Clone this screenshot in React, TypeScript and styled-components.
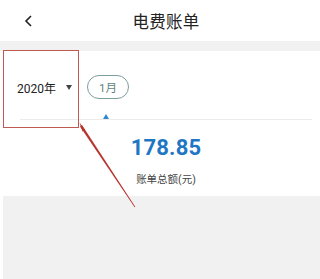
import React from 'react'
import styled, { createGlobalStyle } from 'styled-components'

const GlobalStyle = createGlobalStyle`
  body {
    margin: 0;
    font-family: Roboto, "Noto Sans CJK SC", sans-serif;
    background: #fff;
  }
`

const Page = styled.div`
  position: relative;
  width: 320px;
  height: 279px;
  overflow: hidden;
  background: #fff;
  display: flex;
  flex-direction: column;
`

const Header = styled.div`
  height: 41px;
  display: flex;
  align-items: center;
  padding-left: 24px;
  padding-right: 12px;
`

const BackButton = styled.div`
  width: 10px;
  height: 14px;
  display: flex;
  align-items: center;
`

const Title = styled.div`
  flex: 1;
  text-align: center;
  font-size: 16.5px;
  color: #222;
  letter-spacing: 0.3px;
  padding-right: 10px;
`

const Band = styled.div`
  height: 10px;
  background: #f1f1f1;
`

const FilterRow = styled.div`
  height: 68px;
  padding-top: 4px;
  display: flex;
  align-items: center;
  box-sizing: border-box;
`

const YearSelect = styled.div`
  width: 70px;
  padding-left: 17px;
  display: flex;
  align-items: center;
  font-size: 12px;
  color: #222;
`

const Caret = styled.span`
  margin-left: 10px;
  width: 0;
  height: 0;
  border-left: 3px solid transparent;
  border-right: 3px solid transparent;
  border-top: 5px solid #444;
`

const MonthPill = styled.div`
  height: 24px;
  width: 42px;
  box-sizing: border-box;
  border: 1px solid #7d9c9c;
  border-radius: 12px;
  display: flex;
  align-items: center;
  justify-content: center;
  font-size: 11.5px;
  color: #5f7f80;
`

const IndicatorRow = styled.div`
  margin: -5px 8px 0 20px;
  height: 5px;
  border-bottom: 1px solid #ececec;
  display: flex;
  align-items: flex-end;
`

const Pointer = styled.span`
  margin-left: 83px;
  width: 0;
  height: 0;
  border-left: 3.5px solid transparent;
  border-right: 3.5px solid transparent;
  border-bottom: 5px solid #2f86d2;
`

const Summary = styled.div`
  display: flex;
  flex-direction: column;
  align-items: center;
  padding-left: 12px;
  padding-top: 15px;
  height: 76px;
  box-sizing: border-box;
`

const Amount = styled.div`
  font-size: 22px;
  line-height: 26px;
  font-weight: 700;
  color: #1f77c4;
  letter-spacing: 0.2px;
`

const AmountLabel = styled.div`
  margin-top: 11px;
  font-size: 10.5px;
  line-height: 16px;
  color: #444;
`

const Bottom = styled.div`
  flex: 1;
  background: #f1f1f1;
  margin-left: 3px;
`

const Highlight = styled.div`
  position: absolute;
  left: 3px;
  top: 50px;
  width: 76px;
  height: 78px;
  box-sizing: border-box;
  border: 1.5px solid #bf5a52;
`

const ArrowLayer = styled.svg`
  position: absolute;
  left: 0;
  top: 0;
  pointer-events: none;
`

const App = () => (
  <Page>
    <GlobalStyle />
    <Header>
      <BackButton>
        <svg width='8' height='12' viewBox='0 0 8 12'>
          <path d='M7 1 L2 6 L7 11' fill='none' stroke='#222' strokeWidth='1.6' />
        </svg>
      </BackButton>
      <Title>电费账单</Title>
    </Header>
    <Band />
    <FilterRow>
      <YearSelect>
        2020年
        <Caret />
      </YearSelect>
      <MonthPill>1月</MonthPill>
    </FilterRow>
    <IndicatorRow>
      <Pointer />
    </IndicatorRow>
    <Summary>
      <Amount>178.85</Amount>
      <AmountLabel>账单总额(元)</AmountLabel>
    </Summary>
    <Bottom />
    <Highlight />
    <ArrowLayer width='320' height='279'>
      <path d='M79.5 122.5 L85 130 L82.5 131.5 Z' fill='#b22a25' />
      <path d='M82 125 L135.4 207 L134.6 207.3 L80 126.4 Z' fill='#b8342f' />
    </ArrowLayer>
  </Page>
)

export default App
